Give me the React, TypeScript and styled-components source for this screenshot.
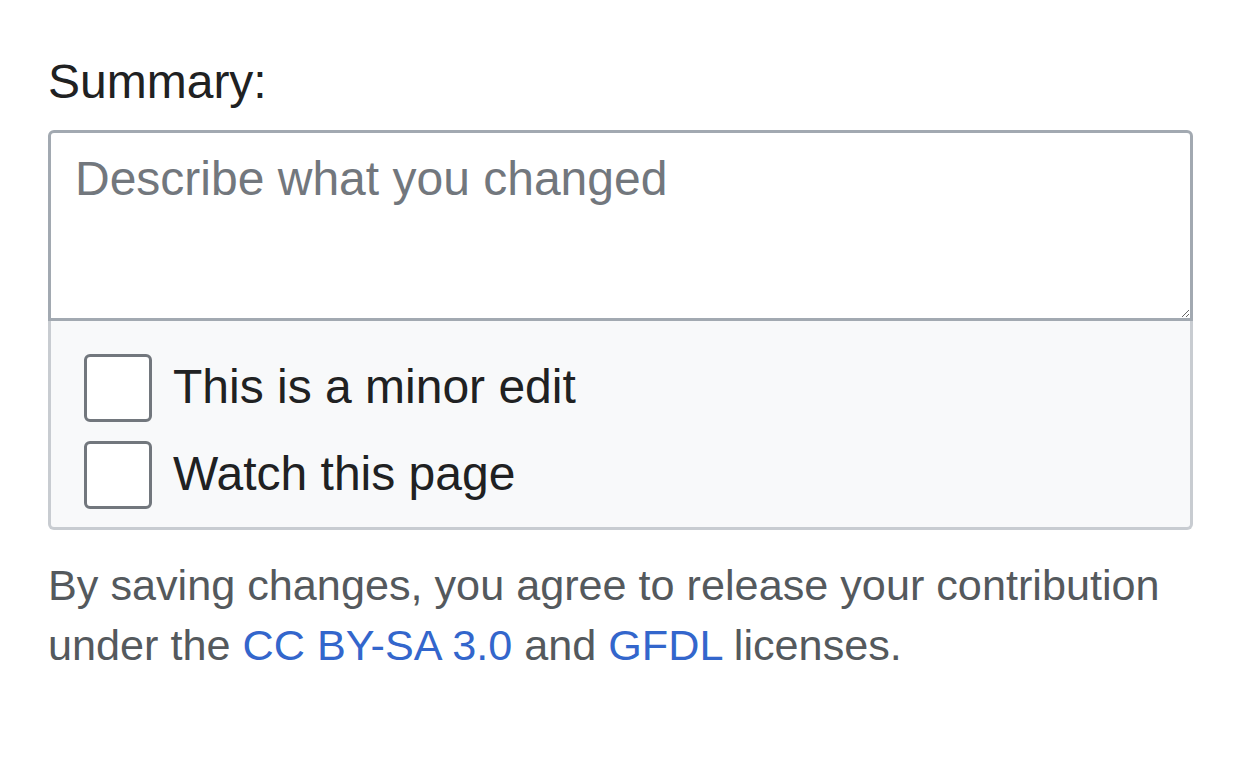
import React from "react";
import styled, { createGlobalStyle } from "styled-components";

const GlobalStyle = createGlobalStyle`
  html, body {
    margin: 0;
    padding: 0;
    background: #ffffff;
  }
  body {
    font-family: "Liberation Sans", Arial, sans-serif;
    color: #202122;
  }
`;

const Page = styled.div`
  width: 1145px;
  padding: 48px 0 0 48px;
  display: flex;
  flex-direction: column;
`;

const SummaryLabel = styled.label`
  font-size: 48px;
  line-height: 67px;
  color: #202122;
  margin-bottom: 15px;
`;

const Field = styled.div`
  display: flex;
  flex-direction: column;
`;

const SummaryInput = styled.textarea`
  box-sizing: border-box;
  display: block;
  width: 100%;
  height: 191px;
  margin: 0;
  padding: 12px 24px;
  border: 3px solid #a2a9b1;
  border-radius: 6px 6px 0 0;
  font-family: "Liberation Sans", Arial, sans-serif;
  font-size: 48px;
  line-height: 67px;
  color: #202122;
  background: #ffffff;
  resize: vertical;
  outline: none;

  &::placeholder {
    color: #72777d;
    opacity: 1;
  }
`;

const Options = styled.div`
  box-sizing: border-box;
  display: flex;
  flex-direction: column;
  gap: 19px;
  padding: 33px 33px 18px;
  background: #f8f9fa;
  border: 3px solid #c8ccd1;
  border-top: none;
  border-radius: 0 0 6px 6px;
`;

const OptionRow = styled.label`
  display: flex;
  align-items: center;
  gap: 21px;
  font-size: 48px;
  line-height: 68px;
  color: #202122;
  cursor: pointer;
`;

const OptionText = styled.span`
  margin-top: -3px;
`;

const Box = styled.input.attrs({ type: "checkbox" })`
  appearance: none;
  -webkit-appearance: none;
  box-sizing: border-box;
  margin: 0;
  width: 68px;
  height: 68px;
  flex: none;
  border: 3px solid #72777d;
  border-radius: 6px;
  background: #ffffff;
`;

const Notice = styled.p`
  margin: 25px 0 0;
  font-size: 43.2px;
  line-height: 60px;
  color: #54595d;
`;

const Link = styled.a`
  color: #3366cc;
  text-decoration: none;
`;

export default function App() {
  return (
    <>
      <GlobalStyle />
      <Page>
        <SummaryLabel htmlFor="summary">Summary:</SummaryLabel>
        <Field>
          <SummaryInput id="summary" placeholder="Describe what you changed" />
          <Options>
            <OptionRow>
              <Box />
              <OptionText>This is a minor edit</OptionText>
            </OptionRow>
            <OptionRow>
              <Box />
              <OptionText>Watch this page</OptionText>
            </OptionRow>
          </Options>
        </Field>
        <Notice>
          By saving changes, you agree to release your contribution under the{" "}
          <Link href="#">CC BY-SA 3.0</Link> and <Link href="#">GFDL</Link> licenses.
        </Notice>
      </Page>
    </>
  );
}
